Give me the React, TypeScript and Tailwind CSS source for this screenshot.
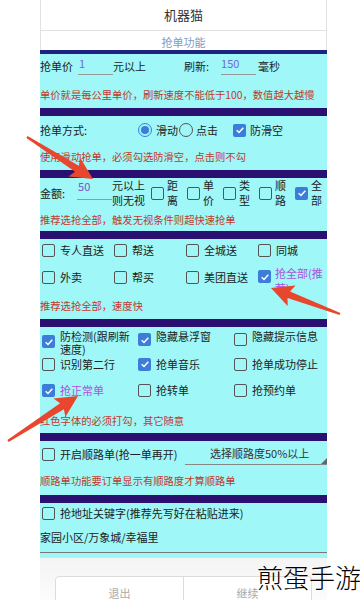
import React from "react";

function Box({ on }: { on?: boolean }) {
  return on ? (
    <span className="inline-flex w-[13px] h-[13px] shrink-0 items-center justify-center rounded-[2px] bg-[#3b7dd8]">
      <svg viewBox="0 0 12 12" className="w-[10px] h-[10px]">
        <path d="M2 6.3 L4.8 9 L10 3.2" stroke="white" strokeWidth="1.8" fill="none" />
      </svg>
    </span>
  ) : (
    <span className="inline-block w-[13px] h-[13px] shrink-0 rounded-[2px] border-[1.5px] border-[#555]" />
  );
}

function Radio({ on }: { on?: boolean }) {
  return (
    <span
      className={`inline-flex w-[14px] h-[14px] shrink-0 items-center justify-center rounded-full border-[1.5px] ${
        on ? "border-[#3b7dd8]" : "border-[#555]"
      }`}
    >
      {on && <span className="w-[8px] h-[8px] rounded-full bg-[#3b7dd8]" />}
    </span>
  );
}

function Bar() {
  return <div className="h-[8px] bg-[#2a1070]" />;
}

function Tip({ text, h }: { text: string; h: string }) {
  return (
    <div className={`${h} flex items-center whitespace-nowrap text-[10.3px] text-[#c0392b]`}>
      {text}
    </div>
  );
}

function Opt({ on, label, w, purple }: { on?: boolean; label: React.ReactNode; w: string; purple?: boolean }) {
  return (
    <div className={`${w} flex items-center shrink-0`}>
      <Box on={on} />
      <span className={`ml-[5px] whitespace-nowrap ${purple ? "text-[#b04fe0]" : ""}`}>{label}</span>
    </div>
  );
}

function VOpt({ on, a, b }: { on?: boolean; a: string; b: string }) {
  return (
    <div className="w-[36px] flex items-center shrink-0">
      <Box on={on} />
      <span className="ml-[3px] flex flex-col leading-[15px] shrink-0">
        <span>{a}</span>
        <span>{b}</span>
      </span>
    </div>
  );
}

const arrows = [
  { x1: 27, y1: 137, x2: 93, y2: 179 },
  { x1: 340, y1: 314, x2: 271, y2: 288 },
  { x1: 8, y1: 441, x2: 78, y2: 396 },
];

function arrowPoints(a: { x1: number; y1: number; x2: number; y2: number }) {
  const dx = a.x2 - a.x1;
  const dy = a.y2 - a.y1;
  const len = Math.hypot(dx, dy);
  const ux = dx / len;
  const uy = dy / len;
  const nx = -uy;
  const ny = ux;
  const L = 22;
  const W = 11;
  const bx = a.x2 - ux * L;
  const by = a.y2 - uy * L;
  const sx = bx + ux * 3;
  const sy = by + uy * 3;
  const pts = [
    [a.x2, a.y2],
    [bx + nx * W, by + ny * W],
    [sx + nx * 3.5, sy + ny * 3.5],
    [a.x1 + nx * 1.2, a.y1 + ny * 1.2],
    [a.x1 - nx * 1.2, a.y1 - ny * 1.2],
    [sx - nx * 3.5, sy - ny * 3.5],
    [bx - nx * W, by - ny * W],
  ];
  return pts.map((p) => p.map((v) => v.toFixed(1)).join(",")).join(" ");
}

export default function App() {
  return (
    <div className="relative w-[360px] h-[600px] overflow-hidden bg-white font-['Noto_Sans_CJK_SC','Noto_Sans',sans-serif] text-[11px] text-[#222]">
      <div className="ml-[40px] w-[287px] flex flex-col">
        {/* header */}
        <div className="h-[31px] border-x border-b border-[#e2e2e2] flex items-center justify-center text-[13px] text-[#333]">
          机器猫
        </div>
        <div className="h-[19px] pt-[4px] border-x border-[#e2e2e2] flex items-center justify-center text-[11px] text-[#7d9bc8]">
          抢单功能
        </div>
        <div className="h-[4px] bg-[#1c2480]" />

        {/* price / refresh */}
        <div className="bg-[#9ff7f7]">
          <div className="h-[24px] flex items-center whitespace-nowrap">
            <span>抢单价</span>
            <span className="ml-[5px] w-[35px] h-[18px] shrink-0 border-b border-[#999] leading-[13px] text-[#7468d6] pl-[1px]">1</span>
            <span>元以上</span>
            <span className="ml-[38px]">刷新:</span>
            <span className="ml-[12px] w-[35px] h-[18px] shrink-0 border-b border-[#999] leading-[13px] text-[#7468d6]">150</span>
            <span className="ml-[2px]">毫秒</span>
          </div>
          <div className="mt-[4px]">
            <Tip h="h-[26px]" text="单价就是每公里单价，刷新速度不能低于100，数值越大越慢" />
          </div>
        </div>
        <Bar />

        {/* mode */}
        <div className="bg-[#9ff7f7]">
          <div className="h-[28px] flex items-center whitespace-nowrap">
            <span>抢单方式:</span>
            <span className="ml-[51px] flex">
              <Radio on />
            </span>
            <span className="ml-[4px]">滑动</span>
            <span className="ml-[1px] flex">
              <Radio />
            </span>
            <span className="ml-[3px]">点击</span>
            <span className="ml-[15px] flex">
              <Box on />
            </span>
            <span className="ml-[4px]">防滑空</span>
          </div>
          <Tip h="h-[26px]" text="使用滑动抢单，必须勾选防滑空，点击则不勾" />
        </div>
        <Bar />

        {/* amount */}
        <div className="bg-[#9ff7f7]">
          <div className="h-[30px] flex items-center whitespace-nowrap">
            <span className="shrink-0">金额:</span>
            <span className="ml-[12px] shrink-0 self-start mt-[2px] w-[35px] h-[20px] border-b border-[#999] leading-[12px] text-[#7b55c7] pl-[1px]">
              50
            </span>
            <span className="flex flex-col leading-[15px] shrink-0">
              <span>元以上</span>
              <span>则无视</span>
            </span>
            <div className="ml-[6px] flex shrink-0">
              <VOpt a="距" b="离" />
              <VOpt a="单" b="价" />
              <VOpt a="类" b="型" />
              <VOpt a="顺" b="路" />
              <VOpt on a="全" b="部" />
            </div>
          </div>
          <Tip h="h-[23px]" text="推荐选抢全部，触发无视条件则超快速抢单" />
        </div>
        <Bar />

        {/* order types */}
        <div className="bg-[#9ff7f7]">
          <div className="h-[22px] pl-[2px] flex items-center">
            <Opt w="w-[72px]" label="专人直送" />
            <Opt w="w-[72px]" label="帮送" />
            <Opt w="w-[72px]" label="全城送" />
            <Opt w="flex-1" label="同城" />
          </div>
          <div className="h-[32px] pt-[8px] pl-[2px] flex items-start">
            <Opt w="w-[72px]" label="外卖" />
            <Opt w="w-[72px]" label="帮买" />
            <Opt w="w-[72px]" label="美团直送" />
            <div className="flex-1 flex items-start">
              <span className="mt-[1px] flex">
                <Box on />
              </span>
              <span className="ml-[4px] -mt-[3px] leading-[15px] text-[#b04fe0] whitespace-nowrap">
                抢全部(推
                <br />
                荐)
              </span>
            </div>
          </div>
          <Tip h="h-[26px]" text="推荐选抢全部，速度快" />
        </div>
        <Bar />

        {/* options */}
        <div className="bg-[#9ff7f7] pt-[3px]">
          <div className="h-[25px] pl-[2px] flex items-start">
            <div className="w-[96px] flex items-start shrink-0">
              <span className="mt-[5px] flex">
                <Box on />
              </span>
              <span className="ml-[5px] leading-[13px] whitespace-nowrap">
                防检测(跟刷新
                <br />
                速度)
              </span>
            </div>
            <div className="w-[96px] flex items-start shrink-0">
              <span className="mt-[3px] flex">
                <Box on />
              </span>
              <span className="ml-[5px] leading-[13px]">隐藏悬浮窗</span>
            </div>
            <div className="flex-1 flex items-start">
              <span className="mt-[3px] flex">
                <Box />
              </span>
              <span className="ml-[5px] leading-[13px]">隐藏提示信息</span>
            </div>
          </div>
          <div className="h-[16px] mt-[1px] pl-[2px] flex items-center">
            <Opt w="w-[96px]" label="识别第二行" />
            <Opt w="w-[96px]" on label="抢单音乐" />
            <Opt w="flex-1" label="抢单成功停止" />
          </div>
          <div className="h-[37px] pl-[2px] flex items-center">
            <Opt w="w-[96px]" on purple label="抢正常单" />
            <Opt w="w-[96px]" label="抢转单" />
            <Opt w="flex-1" label="抢预约单" />
          </div>
          <Tip h="h-[24px]" text="红色字体的必须打勾，其它随意" />
        </div>
        <Bar />

        {/* route */}
        <div className="bg-[#9ff7f7]">
          <div className="h-[26px] pl-[2px] flex items-center">
            <Box />
            <span className="ml-[5px] whitespace-nowrap">开启顺路单(抢一单再开)</span>
            <div className="relative ml-auto w-[142px] h-[22px] border-b border-[#888] flex items-center pl-[25px] text-[#333] whitespace-nowrap">
              选择顺路度50%以上
              <span className="absolute right-0 bottom-0 w-0 h-0 border-l-[6px] border-l-transparent border-b-[6px] border-b-[#666]" />
            </div>
          </div>
          <Tip h="h-[28px]" text="顺路单功能要订单显示有顺路度才算顺路单" />
        </div>
        <Bar />

        {/* address keywords */}
        <div className="bg-[#9ff7f7]">
          <div className="h-[20px] pl-[2px] flex items-center">
            <Box />
            <span className="ml-[5px] whitespace-nowrap">抢地址关键字(推荐先写好在粘贴进来)</span>
          </div>
          <div className="h-[30px] flex items-center border-b border-[#777]">家园小区/万象城/幸福里</div>
          <div className="h-[5px]" />
        </div>

        {/* buttons */}
        <div className="h-[60px] bg-gradient-to-b from-[#f4f4f4] to-white px-[15px] pt-[18px]">
          <div className="h-[34px] flex rounded-[4px] border border-[#dcdcdc] bg-white text-[11px] text-[#aaa]">
            <div className="w-[128px] border-r border-[#dcdcdc] flex items-center justify-center">退出</div>
            <div className="flex-1 flex items-center justify-center">继续</div>
          </div>
        </div>
      </div>

      <svg className="absolute left-0 top-0 pointer-events-none" width="360" height="600" viewBox="0 0 360 600">
        {arrows.map((a, i) => (
          <polygon key={i} points={arrowPoints(a)} fill="#e8472e" />
        ))}
      </svg>

      <div className="absolute left-[257px] top-[562px] whitespace-nowrap text-[26px] leading-[30px] font-light text-black">
        煎蛋手游
      </div>
    </div>
  );
}
